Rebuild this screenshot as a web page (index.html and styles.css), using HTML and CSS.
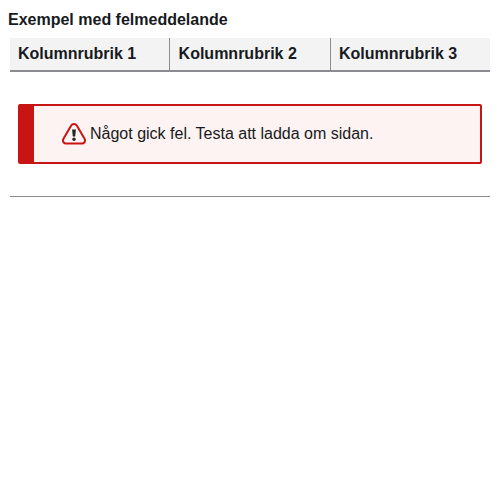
FILE: index.html
```html
<!DOCTYPE html>
<html lang="sv">
<head>
<meta charset="utf-8">
<title>Exempel med felmeddelande</title>
<link rel="stylesheet" href="styles.css">
</head>
<body>
<h1 class="caption">Exempel med felmeddelande</h1>
<div class="table">
  <div class="head">
    <div class="cell">Kolumnrubrik 1</div>
    <div class="cell">Kolumnrubrik 2</div>
    <div class="cell">Kolumnrubrik 3</div>
  </div>
  <div class="body">
    <div class="alert" role="alert">
      <svg class="icon" viewBox="0 0 24 24" aria-hidden="true">
        <path class="tri" d="M9.2 3.6a3.2 3.2 0 0 1 5.6 0l7.6 12.9a3.2 3.2 0 0 1-2.8 5.1H4.4a3.2 3.2 0 0 1-2.8-5.1z"/>
        <path class="mark" d="M10.1 7.6h3.8l-.7 6.8h-2.4z"/>
        <circle class="mark" cx="12" cy="17.3" r="1.7"/>
      </svg>
      <span>Något gick fel. Testa att ladda om sidan.</span>
    </div>
  </div>
</div>
</body>
</html>
```

FILE: styles.css
```css
body {
  margin: 0;
  padding: 8px;
  background: #fff;
  color: #171a21;
  font: 16px/24px "Liberation Sans", Arial, sans-serif;
}
.caption {
  margin: 0 0 6px;
  font-size: 16px;
  line-height: 24px;
  font-weight: 700;
}
.table {
  margin: 0 2px;
}
.head {
  display: grid;
  grid-template-columns: 160px 161px 159px;
  border-bottom: 2px solid #8d8b91;
  background: #f3f3f3;
  font-weight: 700;
}
.cell {
  box-sizing: border-box;
  height: 32px;
  padding: 4px 8px;
  border-right: 1px solid #8d8d91;
}
.cell:nth-child(2) {
  padding-left: 8.6px;
}
.cell:last-child {
  border-right: 0;
}
.body {
  padding: 32px 8px;
  border-bottom: 1px solid #8d8d91;
}
.alert {
  box-sizing: border-box;
  height: 60px;
  display: flex;
  align-items: center;
  gap: 4px;
  padding-left: 28px;
  border: 2px solid #c91414;
  border-left-width: 16px;
  border-radius: 2px;
  background: #fdf3f2;
}
.icon {
  width: 24px;
  height: 24px;
}
.tri {
  fill: none;
  stroke: #c91414;
  stroke-width: 2;
}
.mark {
  fill: #262626;
}
```
